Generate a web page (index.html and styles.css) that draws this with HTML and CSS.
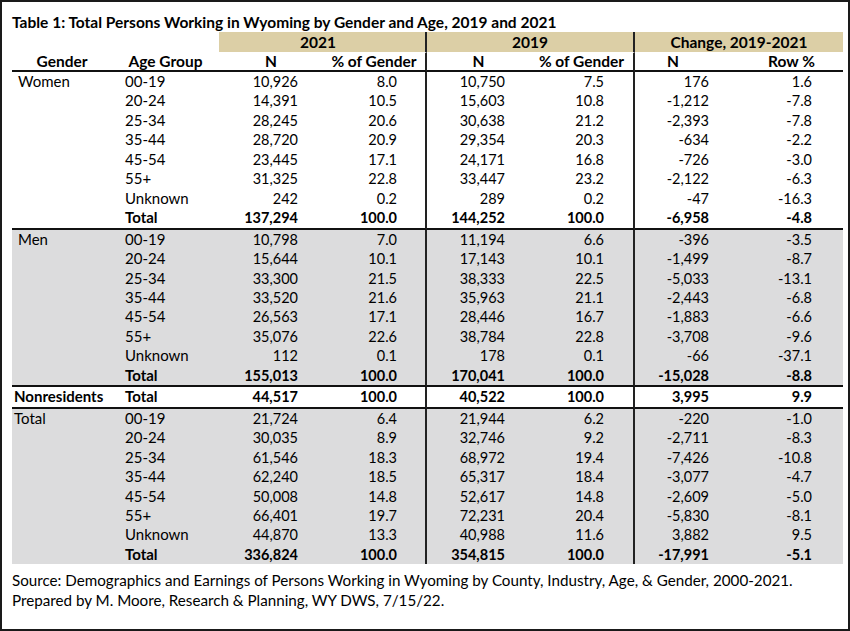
FILE: index.html
```html
<!DOCTYPE html>
<html>
<head>
<meta charset="utf-8">
<link rel="stylesheet" href="styles.css">
</head>
<body>
<div class="frame">
  <div class="title">Table 1: Total Persons Working in Wyoming by Gender and Age, 2019 and 2021</div>
  <table class="tbl">
    <colgroup>
      <col class="c1"><col class="c2"><col class="c3"><col class="c4"><col class="c5"><col class="c6"><col class="c7"><col class="c8">
    </colgroup>
    <thead>
      <tr class="band">
        <th class="blank"></th><th class="blank"></th>
        <th colspan="2" class="tan y21 vr">2021</th>
        <th colspan="2" class="tan vr">2019</th>
        <th colspan="2" class="tan">Change, 2019-2021</th>
      </tr>
      <tr class="sub">
        <th>Gender</th><th>Age Group</th>
        <th>N</th><th class="vr">% of Gender</th>
        <th>N</th><th class="vr">% of Gender</th>
        <th class="chn">N</th><th>Row %</th>
      </tr>
    </thead>
    <tbody class="white">
      <tr><td class="g">Women</td><td class="a">00-19</td><td class="n3">10,926</td><td class="n4 vr">8.0</td><td class="n5">10,750</td><td class="n6 vr">7.5</td><td class="n7">176</td><td class="n8">1.6</td></tr>
      <tr><td class="g"></td><td class="a">20-24</td><td class="n3">14,391</td><td class="n4 vr">10.5</td><td class="n5">15,603</td><td class="n6 vr">10.8</td><td class="n7">-1,212</td><td class="n8">-7.8</td></tr>
      <tr><td class="g"></td><td class="a">25-34</td><td class="n3">28,245</td><td class="n4 vr">20.6</td><td class="n5">30,638</td><td class="n6 vr">21.2</td><td class="n7">-2,393</td><td class="n8">-7.8</td></tr>
      <tr><td class="g"></td><td class="a">35-44</td><td class="n3">28,720</td><td class="n4 vr">20.9</td><td class="n5">29,354</td><td class="n6 vr">20.3</td><td class="n7">-634</td><td class="n8">-2.2</td></tr>
      <tr><td class="g"></td><td class="a">45-54</td><td class="n3">23,445</td><td class="n4 vr">17.1</td><td class="n5">24,171</td><td class="n6 vr">16.8</td><td class="n7">-726</td><td class="n8">-3.0</td></tr>
      <tr><td class="g"></td><td class="a">55+</td><td class="n3">31,325</td><td class="n4 vr">22.8</td><td class="n5">33,447</td><td class="n6 vr">23.2</td><td class="n7">-2,122</td><td class="n8">-6.3</td></tr>
      <tr><td class="g"></td><td class="a">Unknown</td><td class="n3">242</td><td class="n4 vr">0.2</td><td class="n5">289</td><td class="n6 vr">0.2</td><td class="n7">-47</td><td class="n8">-16.3</td></tr>
      <tr class="tot"><td class="g"></td><td class="a">Total</td><td class="n3">137,294</td><td class="n4 vr">100.0</td><td class="n5">144,252</td><td class="n6 vr">100.0</td><td class="n7">-6,958</td><td class="n8">-4.8</td></tr>
    </tbody>
    <tbody class="gray">
      <tr><td class="g">Men</td><td class="a">00-19</td><td class="n3">10,798</td><td class="n4 vr">7.0</td><td class="n5">11,194</td><td class="n6 vr">6.6</td><td class="n7">-396</td><td class="n8">-3.5</td></tr>
      <tr><td class="g"></td><td class="a">20-24</td><td class="n3">15,644</td><td class="n4 vr">10.1</td><td class="n5">17,143</td><td class="n6 vr">10.1</td><td class="n7">-1,499</td><td class="n8">-8.7</td></tr>
      <tr><td class="g"></td><td class="a">25-34</td><td class="n3">33,300</td><td class="n4 vr">21.5</td><td class="n5">38,333</td><td class="n6 vr">22.5</td><td class="n7">-5,033</td><td class="n8">-13.1</td></tr>
      <tr><td class="g"></td><td class="a">35-44</td><td class="n3">33,520</td><td class="n4 vr">21.6</td><td class="n5">35,963</td><td class="n6 vr">21.1</td><td class="n7">-2,443</td><td class="n8">-6.8</td></tr>
      <tr><td class="g"></td><td class="a">45-54</td><td class="n3">26,563</td><td class="n4 vr">17.1</td><td class="n5">28,446</td><td class="n6 vr">16.7</td><td class="n7">-1,883</td><td class="n8">-6.6</td></tr>
      <tr><td class="g"></td><td class="a">55+</td><td class="n3">35,076</td><td class="n4 vr">22.6</td><td class="n5">38,784</td><td class="n6 vr">22.8</td><td class="n7">-3,708</td><td class="n8">-9.6</td></tr>
      <tr><td class="g"></td><td class="a">Unknown</td><td class="n3">112</td><td class="n4 vr">0.1</td><td class="n5">178</td><td class="n6 vr">0.1</td><td class="n7">-66</td><td class="n8">-37.1</td></tr>
      <tr class="tot"><td class="g"></td><td class="a">Total</td><td class="n3">155,013</td><td class="n4 vr">100.0</td><td class="n5">170,041</td><td class="n6 vr">100.0</td><td class="n7">-15,028</td><td class="n8">-8.8</td></tr>
    </tbody>
    <tbody class="white">
      <tr class="tot"><td class="g gb">Nonresidents</td><td class="a">Total</td><td class="n3">44,517</td><td class="n4 vr">100.0</td><td class="n5">40,522</td><td class="n6 vr">100.0</td><td class="n7">3,995</td><td class="n8">9.9</td></tr>
    </tbody>
    <tbody class="gray">
      <tr><td class="g gt">Total</td><td class="a">00-19</td><td class="n3">21,724</td><td class="n4 vr">6.4</td><td class="n5">21,944</td><td class="n6 vr">6.2</td><td class="n7">-220</td><td class="n8">-1.0</td></tr>
      <tr><td class="g"></td><td class="a">20-24</td><td class="n3">30,035</td><td class="n4 vr">8.9</td><td class="n5">32,746</td><td class="n6 vr">9.2</td><td class="n7">-2,711</td><td class="n8">-8.3</td></tr>
      <tr><td class="g"></td><td class="a">25-34</td><td class="n3">61,546</td><td class="n4 vr">18.3</td><td class="n5">68,972</td><td class="n6 vr">19.4</td><td class="n7">-7,426</td><td class="n8">-10.8</td></tr>
      <tr><td class="g"></td><td class="a">35-44</td><td class="n3">62,240</td><td class="n4 vr">18.5</td><td class="n5">65,317</td><td class="n6 vr">18.4</td><td class="n7">-3,077</td><td class="n8">-4.7</td></tr>
      <tr><td class="g"></td><td class="a">45-54</td><td class="n3">50,008</td><td class="n4 vr">14.8</td><td class="n5">52,617</td><td class="n6 vr">14.8</td><td class="n7">-2,609</td><td class="n8">-5.0</td></tr>
      <tr><td class="g"></td><td class="a">55+</td><td class="n3">66,401</td><td class="n4 vr">19.7</td><td class="n5">72,231</td><td class="n6 vr">20.4</td><td class="n7">-5,830</td><td class="n8">-8.1</td></tr>
      <tr><td class="g"></td><td class="a">Unknown</td><td class="n3">44,870</td><td class="n4 vr">13.3</td><td class="n5">40,988</td><td class="n6 vr">11.6</td><td class="n7">3,882</td><td class="n8">9.5</td></tr>
      <tr class="last"><td class="g"></td><td class="a">Total</td><td class="n3">336,824</td><td class="n4 vr">100.0</td><td class="n5">354,815</td><td class="n6 vr">100.0</td><td class="n7">-17,991</td><td class="n8">-5.1</td></tr>
    </tbody>
  </table>
  <div class="source">
    <div>Source: Demographics and Earnings of Persons Working in Wyoming by County, Industry, Age, &amp; Gender, 2000-2021.</div>
    <div>Prepared by M. Moore, Research &amp; Planning, WY DWS, 7/15/22.</div>
  </div>
</div>
</body>
</html>
```

FILE: styles.css
```css
html, body {
  margin: 0;
  padding: 0;
  background: #ffffff;
}

.frame {
  box-sizing: border-box;
  width: 850px;
  height: 631px;
  border: 2px solid #1a1a1a;
  padding: 11px 0 0 10px;
  font-family: Lato, "Open Sans", sans-serif;
  color: #000;
  background: #fff;
}

.title {
  font-weight: 700;
  font-size: 15.5px;
  line-height: 19px;
  height: 19px;
  white-space: nowrap;
}

.tbl {
  table-layout: fixed;
  border-collapse: separate;
  border-spacing: 0;
  width: 831px;
  font-size: 14.5px;
}

.c1 { width: 100px; }
.c2 { width: 107px; }
.c3 { width: 104px; }
.c4 { width: 104px; }
.c5 { width: 103px; }
.c6 { width: 105px; }
.c7 { width: 105px; }
.c8 { width: 103px; }

.tbl th, .tbl td {
  padding: 0;
  white-space: nowrap;
  overflow: hidden;
}

.band th {
  height: 20px;
  line-height: 20px;
  font-size: 15.5px;
  font-weight: 700;
  text-align: center;
  border-bottom: 1px solid #fff;
}

.band .tan {
  background: #dccfa6;
}

.band .y21 {
  padding-right: 8px;
}

.sub th {
  height: 17px;
  line-height: 17px;
  font-size: 15.5px;
  font-weight: 700;
  text-align: center;
  border-bottom: 2px solid #111;
  vertical-align: top;
}

.sub th.chn {
  padding-right: 29px;
}

.vr {
  border-right: 2px solid #222;
}

.tbl td {
  height: 19.45px;
  line-height: 19.45px;
}

.gray td {
  background: #dcdcdd;
}

.white td {
  background: #fff;
}

.tot td {
  border-bottom: 2px solid #111;
  font-weight: 700;
}

.last td {
  font-weight: 700;
}

.g {
  text-align: left;
  font-size: 15px;
  padding-left: 6px !important;
}

.g.gt, .g.gb {
  padding-left: 2px !important;
}

.a {
  text-align: left;
  font-size: 15px;
  padding-left: 13px !important;
}

.n3 { text-align: right; padding-right: 25px !important; }
.n4 { text-align: right; padding-right: 28px !important; }
.n5 { text-align: right; padding-right: 25px !important; }
.n6 { text-align: right; padding-right: 29px !important; }
.n7 { text-align: right; padding-right: 31px !important; }
.n8 { text-align: right; padding-right: 31px !important; }

.source {
  margin-top: 6px;
  font-size: 15.2px;
  line-height: 20px;
}
```
